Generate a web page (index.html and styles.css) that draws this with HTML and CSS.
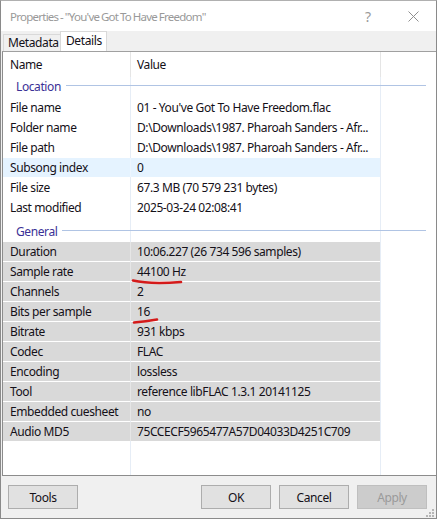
FILE: index.html
```html
<!DOCTYPE html>
<html>
<head>
<meta charset="utf-8">
<link rel="stylesheet" href="styles.css">
</head>
<body>
<div class="window">
  <div class="titlebar">
    <span class="title">Properties - "You've Got To Have Freedom"</span>
    <span class="help">?</span>
    <svg class="close" width="11" height="11" viewBox="0 0 11 11"><path d="M0.5 0.5 L10.5 10.5 M10.5 0.5 L0.5 10.5" stroke="#8f8f8f" stroke-width="1" fill="none"/></svg>
  </div>
  <div class="tabs">
    <div class="tab">Metadata</div>
    <div class="tab active">Details</div>
  </div>
  <div class="list">
    <div class="row header"><div class="c1">Name</div><div class="c2">Value</div></div>
    <div class="group first"><span>Location</span><i></i></div>
    <div class="row"><div class="c1">File name</div><div class="c2">01 - You've Got To Have Freedom.flac</div></div>
    <div class="row"><div class="c1">Folder name</div><div class="c2">D:\Downloads\1987. Pharoah Sanders - Afr...</div></div>
    <div class="row"><div class="c1">File path</div><div class="c2">D:\Downloads\1987. Pharoah Sanders - Afr...</div></div>
    <div class="row hover"><div class="c1">Subsong index</div><div class="c2">0</div></div>
    <div class="row"><div class="c1">File size</div><div class="c2">67.3 MB (70 579 231 bytes)</div></div>
    <div class="row"><div class="c1">Last modified</div><div class="c2">2025-03-24 02:08:41</div></div>
    <div class="group second"><span>General</span><i></i></div>
    <div class="row grey"><div class="c1">Duration</div><div class="c2">10:06.227 (26 734 596 samples)</div></div>
    <div class="row grey"><div class="c1">Sample rate</div><div class="c2">44100 Hz</div></div>
    <div class="row grey"><div class="c1">Channels</div><div class="c2">2</div></div>
    <div class="row grey"><div class="c1">Bits per sample</div><div class="c2">16</div></div>
    <div class="row grey"><div class="c1">Bitrate</div><div class="c2">931 kbps</div></div>
    <div class="row grey"><div class="c1">Codec</div><div class="c2">FLAC</div></div>
    <div class="row grey"><div class="c1">Encoding</div><div class="c2">lossless</div></div>
    <div class="row grey"><div class="c1">Tool</div><div class="c2">reference libFLAC 1.3.1 20141125</div></div>
    <div class="row grey"><div class="c1">Embedded cuesheet</div><div class="c2">no</div></div>
    <div class="row grey"><div class="c1">Audio MD5</div><div class="c2">75CCECF5965477A57D04033D4251C709</div></div>
  </div>
  <div class="footer">
    <button class="btn">Tools</button>
    <span class="spacer"></span>
    <button class="btn">OK</button>
    <button class="btn">Cancel</button>
    <button class="btn disabled">Apply</button>
  </div>
  <svg class="marks" width="437" height="519" viewBox="0 0 437 519">
    <path d="M133 280.5 Q150 284.5 181 282" stroke="#d41a1a" stroke-width="2.6" stroke-linecap="round" fill="none"/>
    <path d="M134 322.5 Q146 321.5 157 319.5" stroke="#d41a1a" stroke-width="2.6" stroke-linecap="round" fill="none"/>
  </svg>
  <svg class="grip" width="437" height="519" viewBox="0 0 437 519">
    <g fill="#b5b5b5">
      <rect x="432" y="509" width="2" height="2"/>
      <rect x="429" y="512" width="2" height="2"/>
      <rect x="432" y="512" width="2" height="2"/>
      <rect x="426" y="515" width="2" height="2"/>
      <rect x="429" y="515" width="2" height="2"/>
      <rect x="432" y="515" width="2" height="2"/>
    </g>
  </svg>
</div>
</body>
</html>
```
FILE: styles.css
```css
* { box-sizing: border-box; }
html, body { margin: 0; padding: 0; background: #ffffff; }
body {
  font-family: "Noto Sans", "Open Sans", sans-serif;
  font-size: 12px;
  letter-spacing: -0.4px;
  color: #141018;
}
.window {
  position: relative;
  width: 437px;
  height: 519px;
  border: 1px solid #8a8a8a;
  border-top-color: #b0b0b0;
  background: #f0f0f0;
  display: flex;
  flex-direction: column;
}
.titlebar {
  height: 30px;
  background: #ffffff;
  display: flex;
  align-items: center;
  padding-top: 1px;
  padding-left: 9px;
}
.title {
  color: #999999;
  font-size: 11.5px;
  letter-spacing: -0.75px;
  word-spacing: -0.5px;
  line-height: 16px;
  flex: 1;
}
.help {
  color: #9a9a9a;
  font-size: 14px;
  line-height: 16px;
  width: 43px;
}
.close {
  margin-right: 17px;
  margin-top: -1px;
}
.tabs {
  height: 20px;
  display: flex;
  align-items: flex-end;
  padding-left: 2px;
}
.tab {
  height: 17px;
  width: 57px;
  border: 1px solid #d9d9d9;
  border-right: none;
  border-bottom: none;
  padding-left: 4px;
  line-height: 16px;
  background: #f0f0f0;
  white-space: nowrap;
}
.tab.active {
  height: 20px;
  width: 47px;
  border-right: 1px solid #d9d9d9;
  background: #ffffff;
  padding-left: 5px;
  line-height: 17px;
}
.list {
  flex: 1;
  margin-left: 1px;
  border-top: 1px solid #a0a0a0;
  border-left: 1px solid #8c8c8c;
  border-bottom: 1px solid #8c8c8c;
  background-color: #ffffff;
  background-image:
    linear-gradient(to right, transparent 127px, #e6edf6 127px, #e6edf6 128px, transparent 128px),
    linear-gradient(to right, transparent 377px, #e6edf6 377px, #e6edf6 378px, transparent 378px);
}
.row {
  display: flex;
  height: 20px;
}
.row .c1 {
  width: 128px;
  border-right: 1px solid transparent;
  padding-left: 7px;
  height: 19px;
  line-height: 19px;
  white-space: nowrap;
}
.row .c2 {
  width: 249px;
  padding-left: 6px;
  height: 19px;
  line-height: 19px;
  white-space: nowrap;
}
.row.header {
  height: 25px;
}
.row.header .c1,
.row.header .c2 {
  height: 25px;
  line-height: 25px;
}
.row.header .c1 { border-right-color: #e5e5e5; }
.row.header .c2 { border-right: 1px solid #e5e5e5; width: 250px; }
.row.hover .c1,
.row.hover .c2 { background: #e5f3ff; }
.row.hover .c1 { border-right-color: rgba(255,255,255,0.3); }
.row.grey .c1,
.row.grey .c2 { background: #d9d9d9; }
.row.grey .c1 { border-right-color: rgba(255,255,255,0.35); }
.group {
  display: flex;
  align-items: flex-start;
  padding-left: 13px;
  padding-right: 10px;
  gap: 5px;
}
.group span {
  color: #3b3196;
  line-height: 20px;
}
.group i {
  flex: 1;
  height: 1px;
  background: #b0c4e4;
  margin-top: 8px;
}
.group.first { height: 21px; }
.group.second { height: 24px; padding-top: 4px; }
.footer {
  height: 42px;
  display: flex;
  align-items: flex-start;
  padding: 9px 9px 0 7px;
  gap: 8px;
}
.spacer { flex: 1; }
.btn {
  width: 70px;
  height: 24px;
  border: 1px solid #adadad;
  background: #e1e1e1;
  font-family: "Noto Sans", "Open Sans", sans-serif;
  font-size: 12px;
  letter-spacing: -0.4px;
  color: #141018;
  padding: 0;
  margin: 0;
}
.btn.disabled {
  background: #cccccc;
  border-color: #bfbfbf;
  color: #9a9a9a;
}
.marks, .grip {
  position: absolute;
  left: -1px;
  top: -1px;
  pointer-events: none;
}
```
